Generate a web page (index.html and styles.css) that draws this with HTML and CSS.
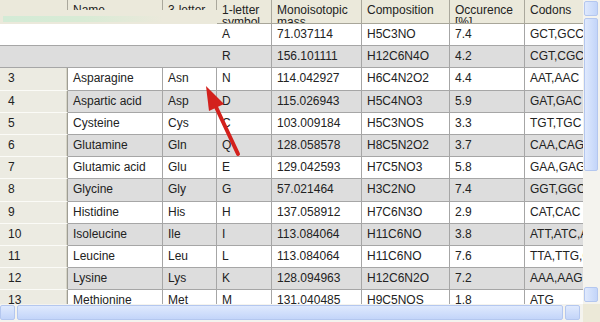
FILE: index.html
```html
<!DOCTYPE html>
<html lang="en">
  <head>
    <meta charset="UTF-8" />
    <title>Amino acids</title>
    <link rel="stylesheet" href="styles.css">
  </head>
  <body>
    <div class="window">
      <div class="viewport">
        <div class="row head">
          <div class="cell"></div>
          <div class="cell">Name</div>
          <div class="cell">3-letter</div>
          <div class="cell">1-letter symbol</div>
          <div class="cell">Monoisotopic mass</div>
          <div class="cell">Composition</div>
          <div class="cell">Occurence [%]</div>
          <div class="cell">Codons</div>
        </div>
        <div class="row">
          <div class="cell blank"></div>
          <div class="cell">A</div><div class="cell">71.037114</div><div class="cell">H5C3NO</div><div class="cell">7.4</div><div class="cell">GCT,GCC,GCA,GCG</div>
        </div>
        <div class="row alt">
          <div class="cell blank"></div>
          <div class="cell">R</div><div class="cell">156.101111</div><div class="cell">H12C6N4O</div><div class="cell">4.2</div><div class="cell">CGT,CGC,CGA,CGG</div>
        </div>
        <div class="row">
          <div class="cell rh">3</div><div class="cell">Asparagine</div><div class="cell">Asn</div><div class="cell">N</div><div class="cell">114.042927</div><div class="cell">H6C4N2O2</div><div class="cell">4.4</div><div class="cell">AAT,AAC</div>
        </div>
        <div class="row alt">
          <div class="cell rh">4</div><div class="cell">Aspartic acid</div><div class="cell">Asp</div><div class="cell">D</div><div class="cell">115.026943</div><div class="cell">H5C4NO3</div><div class="cell">5.9</div><div class="cell">GAT,GAC</div>
        </div>
        <div class="row">
          <div class="cell rh">5</div><div class="cell">Cysteine</div><div class="cell">Cys</div><div class="cell">C</div><div class="cell">103.009184</div><div class="cell">H5C3NOS</div><div class="cell">3.3</div><div class="cell">TGT,TGC</div>
        </div>
        <div class="row alt">
          <div class="cell rh">6</div><div class="cell">Glutamine</div><div class="cell">Gln</div><div class="cell">Q</div><div class="cell">128.058578</div><div class="cell">H8C5N2O2</div><div class="cell">3.7</div><div class="cell">CAA,CAG</div>
        </div>
        <div class="row">
          <div class="cell rh">7</div><div class="cell">Glutamic acid</div><div class="cell">Glu</div><div class="cell">E</div><div class="cell">129.042593</div><div class="cell">H7C5NO3</div><div class="cell">5.8</div><div class="cell">GAA,GAG</div>
        </div>
        <div class="row alt">
          <div class="cell rh">8</div><div class="cell">Glycine</div><div class="cell">Gly</div><div class="cell">G</div><div class="cell">57.021464</div><div class="cell">H3C2NO</div><div class="cell">7.4</div><div class="cell">GGT,GGC,GGA,GGG</div>
        </div>
        <div class="row">
          <div class="cell rh">9</div><div class="cell">Histidine</div><div class="cell">His</div><div class="cell">H</div><div class="cell">137.058912</div><div class="cell">H7C6N3O</div><div class="cell">2.9</div><div class="cell">CAT,CAC</div>
        </div>
        <div class="row alt">
          <div class="cell rh">10</div><div class="cell">Isoleucine</div><div class="cell">Ile</div><div class="cell">I</div><div class="cell">113.084064</div><div class="cell">H11C6NO</div><div class="cell">3.8</div><div class="cell">ATT,ATC,ATA</div>
        </div>
        <div class="row">
          <div class="cell rh">11</div><div class="cell">Leucine</div><div class="cell">Leu</div><div class="cell">L</div><div class="cell">113.084064</div><div class="cell">H11C6NO</div><div class="cell">7.6</div><div class="cell">TTA,TTG,CTT,CTC</div>
        </div>
        <div class="row alt">
          <div class="cell rh">12</div><div class="cell">Lysine</div><div class="cell">Lys</div><div class="cell">K</div><div class="cell">128.094963</div><div class="cell">H12C6N2O</div><div class="cell">7.2</div><div class="cell">AAA,AAG</div>
        </div>
        <div class="row">
          <div class="cell rh">13</div><div class="cell">Methionine</div><div class="cell">Met</div><div class="cell">M</div><div class="cell">131.040485</div><div class="cell">H9C5NOS</div><div class="cell">1.8</div><div class="cell">ATG</div>
        </div>
      </div>
      <div class="vscroll">
        <div class="sb-btn"></div>
        <div class="sb-thumb"></div>
        <div class="sb-btn"></div>
      </div>
      <div class="hscroll">
        <div class="sb-btn"></div>
        <div class="sb-thumb"></div>
        <div class="sb-btn"></div>
      </div>
      <div class="corner"></div>

      <!-- dragged header strip over the first rows -->
      <div class="drag"></div>

      <svg class="arrow" width="50" height="85" viewBox="0 0 50 85">
        <line x1="21" y1="29" x2="43" y2="76" stroke="#d3211d" stroke-width="4" stroke-linecap="round" />
        <polygon points="11,8 29,26 14,33" fill="#d3211d" />
      </svg>
    </div>
  </body>
</html>
```

FILE: styles.css
```css
* {
  margin: 0;
  padding: 0;
  box-sizing: border-box;
}
html,
body {
  width: 100%;
  height: 100%;
  overflow: hidden;
}
body {
  font-family: "Liberation Sans", Arial, sans-serif;
  font-size: 12px;
  color: #222;
}
.window {
  position: relative;
  display: grid;
  grid-template-columns: 583px 17px;
  grid-template-rows: 304px 18px;
  width: 600px;
  height: 322px;
  background: #ece9d8;
}
.viewport {
  overflow: hidden;
  background: #fff;
}
.row {
  display: grid;
  grid-template-columns: 68px 95px 54px 55px 90px 88px 75px 110px;
  width: 635px;
  height: 22.2px;
}
.cell {
  border-right: 1px solid #a6a6a6;
  border-bottom: 1px solid #a6a6a6;
  padding-left: 5px;
  line-height: 21px;
  white-space: nowrap;
  overflow: hidden;
}
.row.alt .cell {
  background: #dddddd;
}
.blank {
  grid-column: span 3;
  border-right: none;
}
.row .rh,
.row.alt .rh {
  background: #ecebe2;
  border-bottom-color: #fbfbf7;
  border-right-color: #9e9d94;
  padding-left: 8px;
  box-shadow: inset -1px 0 #d6d4c6;
}
.row.head {
  height: 24px;
}
.head .cell {
  background: #ebe9db;
  border-right-color: #aaa89c;
  border-bottom-color: #a8a699;
  padding-top: 5px;
  line-height: 11.5px;
  white-space: normal;
}

/* scrollbars */
.vscroll {
  display: flex;
  flex-direction: column;
  gap: 2px;
  padding: 1px 2px 2px 1px;
  background: #f4f3ee;
}
.vscroll .sb-btn {
  height: 15px;
}
.vscroll .sb-thumb {
  height: 153px;
  margin-bottom: auto;
}
.hscroll {
  display: flex;
  gap: 2px;
  padding: 1px 3px 2px 0;
  background: #f4f3ee;
}
.hscroll .sb-btn {
  width: 15px;
}
.hscroll .sb-thumb {
  flex: 1;
}
.sb-btn,
.sb-thumb {
  border: 1px solid #b4c7ef;
  border-radius: 2px;
  background: linear-gradient(to right, #dfe9fd, #c3d5f9);
}
.hscroll .sb-btn,
.hscroll .sb-thumb {
  background: linear-gradient(to bottom, #dfe9fd, #c3d5f9);
}
.corner {
  background: #ece9d8;
}

/* overlays */
.drag {
  position: absolute;
  left: 0;
  top: 10px;
  width: 217px;
  height: 14px;
  background: #ebe9db;
}
.drag::after {
  content: "";
  position: absolute;
  left: 3px;
  top: 6px;
  width: 160px;
  height: 6px;
  background: linear-gradient(to right, #d3ebd6, #d8ebd5 50%, rgba(235, 233, 219, 0));
}
.arrow {
  position: absolute;
  left: 195px;
  top: 78px;
}
```
